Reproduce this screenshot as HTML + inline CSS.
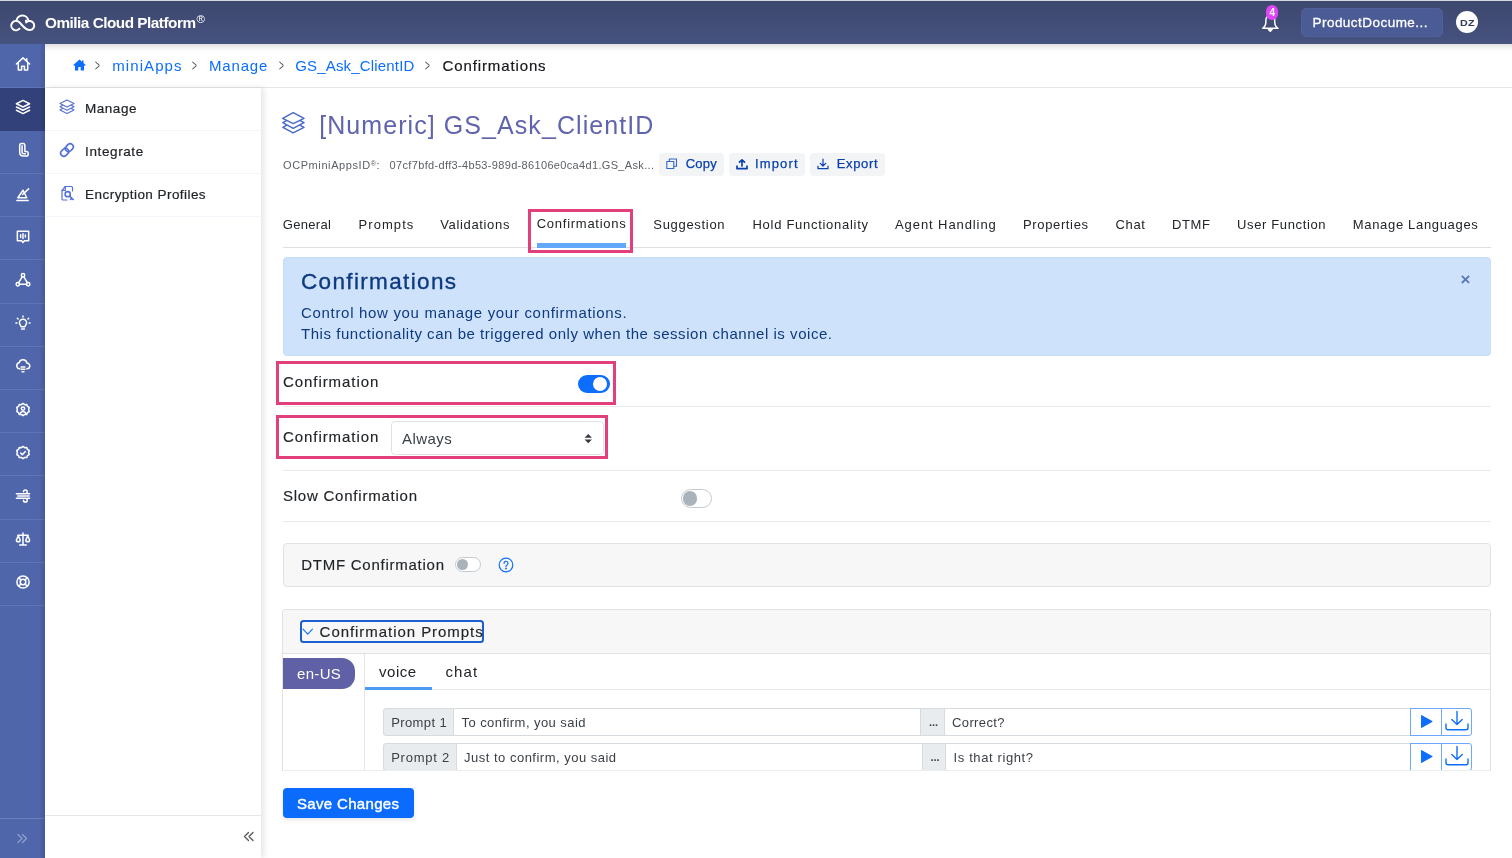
<!DOCTYPE html>
<html lang="en">
<head>
<meta charset="utf-8">
<title>Omilia Cloud Platform - Confirmations</title>
<style>
*{box-sizing:border-box;margin:0;padding:0}
html,body{width:1512px;height:858px;overflow:hidden;background:#fff}
body{will-change:transform;font-family:"Liberation Sans",sans-serif;color:#212529;position:relative}
a{text-decoration:none;color:#0d6efd}
.abs{position:absolute}
.t{position:absolute;white-space:nowrap;line-height:1}
/* top bar */
#top{position:absolute;left:0;top:0;width:1512px;height:44px;background:linear-gradient(#3d486e,#46527f);z-index:5;box-shadow:inset 0 1px 0 #d4d8e3}
#brand{left:45px;top:15px;font-size:15.300px;font-weight:bold;color:#fff}
#brand sup{font-size:11.500px;font-weight:normal;position:relative;top:-5px;vertical-align:baseline;margin-left:1px}
#acct{position:absolute;left:1301px;top:8px;width:142px;height:29px;border-radius:5px;background:#4b5b95;border:1px solid #505f9b}
#acct span{left:10.5px;top:7.2px;font-size:13.5px;color:#fff;-webkit-text-stroke:.3px #fff}
#avatar{position:absolute;left:1456px;top:11px;width:22px;height:22px;border-radius:50%;background:#fff}
#avatar span{left:3.900px;top:6.700px;font-size:9.500px;font-weight:bold;color:#333a5c;transform:scaleX(1.13);transform-origin:0 50%;letter-spacing:.2px}
#badge{position:absolute;left:1266.200px;top:5.300px;width:12.200px;height:14.500px;border-radius:6.100px;background:#df45f7}
#badge span{left:3.2px;top:3.2px;font-size:10px;color:#fff;font-weight:bold}
/* left rail */
#rail{position:absolute;left:0;top:44px;width:45px;height:814px;background:#5066ab}
#rail:after{content:"";position:absolute;right:0;top:0;width:6px;height:814px;background:linear-gradient(90deg,rgba(20,30,80,0),rgba(20,30,80,.16))}
#rail .it{position:absolute;left:0;width:45px;height:43px;border-bottom:1px solid #6075b6}
#rail .it.on{background:#32417a;border-bottom-color:#32417a}
#rail svg{position:absolute;left:14.500px;top:11.500px;width:16px;height:16px;fill:none;stroke:#fff;stroke-width:1.6;stroke-linecap:round;stroke-linejoin:round}
/* breadcrumb */
#crumb{position:absolute;left:45px;top:44px;width:1467px;height:44px;background:#fff;border-bottom:1px solid #e6e6e6;box-shadow:inset 0 8px 6px -6px rgba(0,0,0,.17)}
#crumb .t{top:14px;font-size:15px}
#crumb .sep{color:#555;font-size:16px;top:13.700px;transform:scaleX(.52);transform-origin:0 50%}
/* side panel */
#side{position:absolute;left:45px;top:88px;width:216px;height:770px;background:#fff;box-shadow:3px 0 6px rgba(0,0,0,.10)}
#side .row{position:absolute;left:0;width:216px;height:43px;border-bottom:1px solid #f4f5fb}
#side .row .t{left:40px;top:13.600px;font-size:13.500px;color:#212529;-webkit-text-stroke:.2px #212529}
#side svg{position:absolute;left:14.200px;top:10.500px;width:16px;height:16px;fill:none;stroke:#5472d6;stroke-width:1.3;stroke-linecap:round;stroke-linejoin:round}
#side .foot{position:absolute;left:0;top:727px;width:216px;height:43px;border-top:1px solid #e6e6e6}
/* main */
#main{position:absolute;left:262px;top:88px;width:1250px;height:770px}

#pg{position:absolute;left:-262px;top:-88px;width:0;height:0}
#title{left:320px;top:113px;font-size:25px;color:#6063ad}
.ocp{font-size:11px;color:#5c6166;top:159.500px}
.ocp sup{font-size:7px;position:relative;top:-3px;vertical-align:baseline}
.sbtn{position:absolute;top:152.600px;height:23px;border-radius:4px;background:#f3f4f6}
.sbtn .t{top:4.200px;font-size:13px;color:#0a41ad;-webkit-text-stroke:.25px #0a41ad}
.sbtn svg{position:absolute;top:5.500px;width:12px;height:12px;fill:none;stroke:#0a41ad;stroke-width:1.300;stroke-linecap:round;stroke-linejoin:round}
.tab{top:217.800px;font-size:13px;color:#212529}
.hl{position:absolute;border:3px solid #e2407c}
.hr{position:absolute;left:283px;width:1208px;height:1px;background:#ebebeb}
#alert{position:absolute;left:283px;top:257px;width:1208px;height:99px;background:#cfe2fc;border:1px solid #c6dcfb;border-radius:4px}
.lbl{font-size:15px;color:#212529;-webkit-text-stroke:.15px #212529}
.sw{position:absolute;border-radius:20px}
.sw i{position:absolute;border-radius:50%;display:block}
.card{position:absolute;left:283px;width:1208px;background:#fff;border:1px solid #e2e2e2;border-radius:4px;overflow:hidden}
.igrp{position:absolute;height:27.500px;border:1px solid #d6dbe0;background:#fff}
.igrp .t{top:6.500px;font-size:13px;color:#3a3f45}
</style>
</head>
<body>
<header id="top">
  <svg class="abs" style="left:0;top:0" width="44" height="44" viewBox="0 0 44 44" fill="none" stroke="#fff" stroke-width="2" stroke-linecap="round" stroke-linejoin="round"><path d="M19.500 28.700A4.700 4.700 0 1 1 18.600 21.700C21.500 23.500 24.500 30.100 29.700 30.100A4.600 4.600 0 1 0 26.200 22.400C25.800 21.600 25.800 21 26.100 20.500"/><path d="M16.500 20.800A6 6 0 0 1 28.400 20.600"/></svg>
  <div class="t" id="brand" style="left:45.00px;letter-spacing:-0.482px">Omilia Cloud Platform<sup>®</sup></div>
  <svg class="abs" style="left:1256px;top:10px" width="28" height="26" viewBox="1256 10 28 26" fill="none" stroke="#fff" stroke-width="1.500" stroke-linejoin="round" stroke-linecap="round"><path d="M1262.700 28.300C1265 26.800 1265.900 24.500 1265.900 21.500V20a4.400 4.400 0 0 1 8.800 0v1.500c0 3 .9 5.300 3.200 6.800z"/><path d="M1268.300 29.800l2 2.100 2-2.100z" fill="#fff" stroke-width="1"/></svg>
  <div id="badge"><span class="t">4</span></div>
  <div id="acct"><span class="t" id="acctt" style="left:10.50px;letter-spacing:0.464px">ProductDocume...</span></div>
  <div id="avatar"><span class="t" id="avd">DZ</span></div>
</header>

<nav id="rail">
  <div class="it" style="top:0;height:44px"><svg viewBox="0 0 17 17"><path d="M1.500 8.500 8.500 2l7 6.500"/><path d="M3.500 7.500v7.500h3.500v-4h3v4h3.500V7.500"/><path d="M12.500 3v2"/></svg></div>
  <div class="it on" style="top:43.7px;height:43.2px"><svg viewBox="0 0 17 17"><path d="M8.500 1.500 15.500 5 8.500 8.500 1.500 5z"/><path d="M1.500 8.500 8.500 12l7-3.500"/><path d="M1.500 12 8.500 15.500l7-3.500"/></svg></div>
  <div class="it" style="top:86.9px;height:43.2px"><svg viewBox="0 0 17 17"><path d="M5 3.500a2 2 0 0 1 2-2h1.500a2 2 0 0 1 2 2v6.500h1.500a2 2 0 0 1 2 2v1a2 2 0 0 1-2 2H9c-2.500 0-4-1.500-4-4z"/><path d="M7.500 4v7c0 1 .5 1.500 1.500 1.500h2"/></svg></div>
  <div class="it" style="top:130.1px;height:43.2px"><svg viewBox="0 0 17 17"><path d="M3 12.500 8.500 4.500l4 8z"/><path d="M8 9 14.500 3"/><path d="M2 15.500h12"/></svg></div>
  <div class="it" style="top:173.3px;height:43.2px"><svg viewBox="0 0 17 17"><path d="M2.500 2.500h12v10H10l-1.500 1.800L7 12.500H2.500z"/><path d="M6 6v3M8.500 5v5M11 6.500v2"/></svg></div>
  <div class="it" style="top:216.5px;height:43.2px"><svg viewBox="0 0 17 17"><circle cx="8.500" cy="3.500" r="1.800"/><circle cx="3" cy="13" r="1.800"/><circle cx="14" cy="13" r="1.800"/><path d="M7.600 5.200 3.900 11.300M9.400 5.200l3.700 6.100M4.800 13h7.400"/></svg></div>
  <div class="it" style="top:259.7px;height:43.2px"><svg viewBox="0 0 17 17"><path d="M6.500 12.500c0-1.200-1.800-2-1.800-4.200a3.800 3.800 0 0 1 7.600 0c0 2.200-1.800 3-1.800 4.200z"/><path d="M7 15h3"/><path d="M8.500 1v1M2.500 3.500l.8.800M14.500 3.500l-.8.800M1 8.500h1M15 8.500h1"/></svg></div>
  <div class="it" style="top:302.9px;height:43.2px"><svg viewBox="0 0 17 17"><path d="M5 11.500a3.300 3.300 0 0 1-.6-6.500 4.300 4.300 0 0 1 8.300.300 3.100 3.100 0 0 1-.2 6.200"/><path d="M6.500 9.500h4M6.500 12h4M7.500 14.500h2"/></svg></div>
  <div class="it" style="top:346.1px;height:43.2px"><svg viewBox="0 0 17 17"><path d="M8.500 1.500l1.800 1.300 2.200-.2.700 2.100 1.900 1.100-.6 2.200.6 2.200-1.900 1.100-.7 2.100-2.200-.2-1.800 1.300-1.800-1.300-2.200.2-.7-2.100-1.900-1.100.6-2.200-.6-2.200 1.900-1.100.7-2.100 2.200.2z"/><circle cx="8.500" cy="7" r="1.800"/><path d="M5.300 12.300c.5-1.600 1.800-2.300 3.200-2.300s2.700.7 3.200 2.300"/></svg></div>
  <div class="it" style="top:389.3px;height:43.2px"><svg viewBox="0 0 17 17"><path d="M8.500 1.500l1.800 1.300 2.200-.2.700 2.100 1.900 1.100-.6 2.200.6 2.200-1.900 1.100-.7 2.100-2.200-.2-1.800 1.300-1.800-1.300-2.200.2-.7-2.100-1.900-1.100.6-2.200-.6-2.200 1.900-1.100.7-2.100 2.200.2z"/><path d="M6 8.500l1.800 1.800L11 7"/></svg></div>
  <div class="it" style="top:432.5px;height:43.2px"><svg viewBox="0 0 17 17"><path d="M1.500 6h9.500a2 2 0 1 0-2-2"/><path d="M3 8.500h12"/><path d="M1.500 11h9.500a2 2 0 1 1-2 2"/><path d="M13 6h2.500M13 11h2.500"/></svg></div>
  <div class="it" style="top:475.7px;height:43.2px"><svg viewBox="0 0 17 17"><path d="M8.500 2v12M5 15h7M3 4.500h11"/><path d="M1.500 9.500 3.500 5l2 4.500a2 2 0 0 1-4 0zM11.500 9.500l2-4.500 2 4.500a2 2 0 0 1-4 0z"/></svg></div>
  <div class="it" style="top:518.9px;height:43.2px"><svg viewBox="0 0 17 17"><circle cx="8.500" cy="8.500" r="6.500"/><circle cx="8.500" cy="8.500" r="3"/><path d="M4 4l2.300 2.300M13 4l-2.300 2.300M4 13l2.300-2.300M13 13l-2.300-2.300"/></svg></div>
  <div class="abs" style="left:0;top:773.500px;width:45px;height:1px;background:#6b7fbb"></div>
  <svg class="abs" style="left:16px;top:789px;width:12px;height:11px;stroke:#8f9fd0;stroke-width:1.300" viewBox="0 0 12 11"><path d="M2 1.500l4 4-4 4M6.500 1.500l4 4-4 4"/></svg>
</nav>

<div id="crumb">
  <svg class="abs" style="left:28px;top:15px" width="13" height="12" viewBox="0 0 13 12" fill="#0d6efd"><path d="M6.500 .5.300 6l.8.900L2 6.200V11.500h3.300V8h2.400v3.500H11V6.200l.9.700.8-.9L10.500 4V1.500H9v1.200z"/></svg>
  <span class="t sep" style="left:50px">&gt;</span>
  <a class="t" style="left:67.21px;letter-spacing:1.085px" id="c1">miniApps</a>
  <span class="t sep" style="left:147px">&gt;</span>
  <a class="t" style="left:163.91px;letter-spacing:0.856px" id="c2">Manage</a>
  <span class="t sep" style="left:234px">&gt;</span>
  <a class="t" style="left:250.21px;letter-spacing:0.177px" id="c3">GS_Ask_ClientID</a>
  <span class="t sep" style="left:380px">&gt;</span>
  <span class="t" style="color:#16181b;-webkit-text-stroke:.2px #16181b;left:397.61px;letter-spacing:0.871px" id="c4">Confirmations</span>
</div>

<aside id="side">
  <div class="row" style="top:0"><svg viewBox="0 0 16 16" style="stroke-width:1.100"><path d="M8 1 15 4.500 8 8 1 4.500z"/><path d="M3.600 6.300 1 7.800 8 11.300 15 7.800 12.400 6.300"/><path d="M3.600 9.600 1 11.100 8 14.600 15 11.100 12.400 9.600"/></svg><span class="t" id="s1" style="left:40.11px;letter-spacing:0.501px">Manage</span></div>
  <div class="row" style="top:43px"><svg viewBox="0 0 16 16" style="stroke-width:1.700"><rect x="-4.300" y="-3.100" width="8.600" height="6.200" rx="3.100" transform="translate(10.300 5.700) rotate(-45)"/><rect x="-4.300" y="-3.100" width="8.600" height="6.200" rx="3.100" transform="translate(5.700 10.300) rotate(-45)"/></svg><span class="t" id="s2" style="left:40.11px;letter-spacing:0.600px">Integrate</span></div>
  <div class="row" style="top:86px"><svg viewBox="0 0 16 16" style="stroke-width:1.200"><path d="M3 5.500 6.300 1.500H12.500a1 1 0 0 1 1 1V6M3 5.500V14a1 1 0 0 0 1 1h4"/><path d="M6.300 1.500v4H3"/><circle cx="8.700" cy="9.200" r="2.600" style="stroke-width:1.600"/><path d="M10.500 11l3.700 3.500M12.800 13.300l-1.100 1.100" style="stroke-width:1.700"/></svg><span class="t" id="s3" style="left:40.11px;letter-spacing:0.441px">Encryption Profiles</span></div>
  <div class="foot"><svg style="left:198px;top:15px;width:12px;height:11px;stroke:#555;stroke-width:1.300" viewBox="0 0 12 11"><path d="M5.500 1.500l-4 4 4 4M10 1.500l-4 4 4 4"/></svg></div>
</aside>

<main id="main"><div id="pg">
  <svg class="abs" style="left:281px;top:110px" width="25" height="25" viewBox="281 110 25 25" fill="none" stroke="#486ac8" stroke-width="1.500" stroke-linejoin="round" stroke-linecap="round"><path d="M293.200 112.700 304 118.400 293.200 123.600 282.700 118.400z"/><path d="M286.300 120.700 282.900 122.700 293.200 128.300 304 122.700 300.200 120.700"/><path d="M286.300 125.300 282.900 127.300 293.200 132.800 304 127.300 300.200 125.300"/></svg>
  <h1 class="t" id="title" style="font-weight:normal;left:319.21px;letter-spacing:1.069px">[Numeric] GS_Ask_ClientID</h1>
  <span class="t ocp" style="left:283.00px;letter-spacing:0.592px" id="o1">OCPminiAppsID<sup>®</sup>:</span>
  <span class="t ocp" style="left:389.61px;letter-spacing:0.335px" id="o2">07cf7bfd-dff3-4b53-989d-86106e0ca4d1.GS_Ask...</span>
  <div class="sbtn" style="left:659px;width:65px"><svg style="left:7px;stroke-width:1.100;stroke:#3566cc" viewBox="0 0 12 12"><path d="M.8 3.500h7v7h-7z"/><path d="M3.300 3.500V1h7.200v7.200H7.800"/></svg><span class="t" style="left:26.80px;letter-spacing:0.180px" id="b1">Copy</span></div>
  <div class="sbtn" style="left:729px;width:76px"><svg style="left:7px;stroke-width:1.700" viewBox="0 0 12 12"><path d="M6 8V1.800M3.500 4.200 6 1.800 8.500 4.200M1 8.200v2.500h10V8.200"/></svg><span class="t" style="left:26.00px;letter-spacing:1.131px" id="b2">Import</span></div>
  <div class="sbtn" style="left:810px;width:75px"><svg style="left:7px;stroke-width:1.200" viewBox="0 0 12 12"><path d="M6 1.200V8M3.300 5.300 6 8l2.700-2.700M1 8.200v2.500h10V8.200"/></svg><span class="t" style="left:26.71px;letter-spacing:0.644px" id="b3">Export</span></div>

  <span class="t tab" style="left:282.71px;letter-spacing:0.325px" id="t1">General</span>
  <span class="t tab" style="left:358.61px;letter-spacing:1.049px" id="t2">Prompts</span>
  <span class="t tab" style="left:440.21px;letter-spacing:0.656px" id="t3">Validations</span>
  <span class="t tab" style="top:216.500px;left:536.71px;letter-spacing:0.741px" id="t4">Confirmations</span>
  <span class="t tab" style="left:653.30px;letter-spacing:0.693px" id="t5">Suggestion</span>
  <span class="t tab" style="left:752.50px;letter-spacing:0.716px" id="t6">Hold Functionality</span>
  <span class="t tab" style="left:895.00px;letter-spacing:0.915px" id="t7">Agent Handling</span>
  <span class="t tab" style="left:1023.00px;letter-spacing:0.639px" id="t8">Properties</span>
  <span class="t tab" style="left:1115.40px;letter-spacing:0.710px" id="t9">Chat</span>
  <span class="t tab" style="left:1172.00px;letter-spacing:0.630px" id="t10">DTMF</span>
  <span class="t tab" style="left:1237.00px;letter-spacing:0.640px" id="t11">User Function</span>
  <span class="t tab" style="left:1352.80px;letter-spacing:0.671px" id="t12">Manage Languages</span>
  <div class="hr" style="top:247px;background:#dfdfdf"></div>
  <div class="abs" style="left:536.600px;top:242.700px;width:89.400px;height:5px;background:#62a7f9"></div>
  <div class="hl" style="left:528px;top:209px;width:105px;height:43.700px"></div>

  <div id="alert">
    <span class="t" style="top:13px;font-size:22.500px;color:#0e3a80;-webkit-text-stroke:.35px #0e3a80;left:17.00px;letter-spacing:1.349px" id="a0">Confirmations</span>
    <span class="t" style="top:46.500px;font-size:15px;color:#0e3a80;left:17.00px;letter-spacing:0.684px" id="a1">Control how you manage your confirmations.</span>
    <span class="t" style="top:68px;font-size:15px;color:#0e3a80;left:17.00px;letter-spacing:0.539px" id="a2">This functionality can be triggered only when the session channel is voice.</span>
    <span class="t" style="left:1176.600px;top:13.200px;font-size:17px;font-weight:bold;color:#587ab8">×</span>
  </div>

  <span class="t lbl" style="top:374px;left:283.00px;letter-spacing:0.932px" id="l1">Confirmation</span>
  <div class="sw" style="left:577.500px;top:375px;width:32px;height:18px;background:#0d6efd"><i style="left:15.200px;top:1.600px;width:14.800px;height:14.800px;background:#fff"></i></div>
  <div class="hl" style="left:276px;top:361px;width:340px;height:44px"></div>
  <div class="hr" style="top:406px"></div>

  <span class="t lbl" style="top:429.300px;left:283.00px;letter-spacing:0.932px" id="l2">Confirmation</span>
  <div class="abs" style="left:391px;top:421px;width:212.500px;height:34px;border:1px solid #dfe3e8;border-radius:4px;background:#fff">
    <span class="t" style="top:8.500px;font-size:15px;color:#3a3f45;left:10.00px;letter-spacing:0.437px" id="l3">Always</span>
    <svg class="abs" style="left:191.800px;top:11.500px" width="8.500" height="9.300" viewBox="0 0 7 10" preserveAspectRatio="none" fill="#343a40"><path d="M3.500 0 6.500 4h-6zM3.500 10 .5 6h6z"/></svg>
  </div>
  <div class="hl" style="left:276px;top:415px;width:332px;height:43.700px"></div>
  <div class="hr" style="top:470px"></div>

  <span class="t lbl" style="top:488px;left:283.00px;letter-spacing:0.768px" id="l4">Slow Confirmation</span>
  <div class="sw" style="left:680.500px;top:489px;width:31.300px;height:19px;background:#fff;border:1px solid #c5cad0"><i style="left:1.200px;top:1.200px;width:14.600px;height:14.600px;background:#aab2ba"></i></div>
  <div class="hr" style="top:521px"></div>

  <div class="card" style="top:543px;height:44px;background:#f7f7f7">
    <span class="t lbl" style="top:13.200px;left:17.25px;letter-spacing:0.743px" id="l5">DTMF Confirmation</span>
    <div class="sw" style="left:171.300px;top:13px;width:25.800px;height:15px;background:#fff;border:1px solid #c5cad0"><i style="left:1.200px;top:1px;width:11px;height:11px;background:#aab2ba"></i></div>
    <svg class="abs" style="left:214.200px;top:13.200px" width="16" height="16" viewBox="0 0 16 16" fill="none" stroke="#0d6efd" stroke-width="1.200" stroke-linecap="round"><circle cx="8" cy="8" r="6.800"/><path d="M6 6.300a2 2 0 1 1 3 1.700c-.7.400-1 .8-1 1.500"/><circle cx="8" cy="11.600" r=".4" fill="#0d6efd"/></svg>
  </div>

  <div class="card" style="top:609px;height:162px;left:282px;width:1209px;border-radius:4px 4px 0 0;border-bottom-color:#ececec">
    <div class="abs" style="left:0;top:0;width:1209px;height:44px;background:#f7f7f7;border-bottom:1px solid #e2e2e2"></div>
    <div class="abs" style="left:17.300px;top:9.500px;width:183.500px;height:23.300px;border:2px solid #1b5fd0;border-radius:3.500px">
      <svg class="abs" style="left:0;top:6.200px" width="11.500" height="8" viewBox="0 0 11 8" fill="none" stroke="#0d6efd" stroke-width="1.100" stroke-linecap="round" stroke-linejoin="round"><path d="M.8 1.200 5.500 6.200 10.200 1.200"/></svg>
      <span class="t lbl" style="top:2px;left:17.31px;letter-spacing:0.949px" id="l6">Confirmation Prompts</span>
    </div>
    <div class="abs" style="left:0;top:48px;width:71.700px;height:30.500px;background:#5f60a6;border-radius:0 13px 13px 0"><span class="t" style="top:8px;font-size:15px;color:#fff;left:14.00px;letter-spacing:0.317px" id="l7">en-US</span></div>
    <div class="abs" style="left:81px;top:44px;width:1px;height:120px;background:#e6e6e6"></div>
    <span class="t" style="top:54px;font-size:15px;color:#212529;left:96.11px;letter-spacing:0.467px" id="l8">voice</span>
    <span class="t" style="top:54px;font-size:15px;color:#212529;left:162.50px;letter-spacing:1.114px" id="l9">chat</span>
    <div class="abs" style="left:82px;top:79px;width:1127px;height:1px;background:#e6e6e6"></div>
    <div class="abs" style="left:82px;top:76.500px;width:66.500px;height:3.300px;background:#4d9af3"></div>

    <div class="igrp" style="left:99.500px;top:98px;width:71.500px;background:#e9ecef;border-radius:3px 0 0 3px"><span class="t" style="left:7.71px;letter-spacing:0.393px" id="p1">Prompt 1</span></div>
    <div class="igrp" style="left:170px;top:98px;width:468px"><span class="t" style="left:7.51px;letter-spacing:0.442px" id="p2">To confirm, you said</span></div>
    <div class="igrp" style="left:637px;top:98px;width:25px;background:#e9ecef"><span class="t" style="left:8px;font-weight:bold;font-size:11px;top:8px">...</span></div>
    <div class="igrp" style="left:661px;top:98px;width:467px"><span class="t" style="left:7.00px;letter-spacing:0.392px" id="p3">Correct?</span></div>
    <div class="igrp" style="left:1127px;top:98px;width:32px;border-color:#6ea8fe"><svg class="abs" style="left:8.500px;top:4.500px" width="13.500" height="15" viewBox="0 0 13 14" fill="#0d6efd" stroke="#0d6efd" stroke-width="1" stroke-linejoin="round"><path d="M1.500 1.300v11.400L11.500 7z"/></svg></div>
    <div class="igrp" style="left:1158px;top:98px;width:31px;border-color:#6ea8fe;border-radius:0 3px 3px 0"><svg class="abs" style="left:2.500px;top:1.300px" width="24" height="22" viewBox="0 0 24 22" fill="none" stroke="#0d6efd" stroke-width="1.400" stroke-linecap="round" stroke-linejoin="round"><path d="M12 1.500v13M6.800 9.500l5.200 5 5.200-5M1 14v3.800a2 2 0 0 0 2 2h18a2 2 0 0 0 2-2V14"/></svg></div>

    <div class="igrp" style="left:99.500px;top:133px;width:74.500px;background:#e9ecef;border-radius:3px 0 0 3px"><span class="t" style="left:7.71px;letter-spacing:0.750px" id="p4">Prompt 2</span></div>
    <div class="igrp" style="left:173px;top:133px;width:467px"><span class="t" style="left:7.11px;letter-spacing:0.489px" id="p5">Just to confirm, you said</span></div>
    <div class="igrp" style="left:639px;top:133px;width:24px;background:#e9ecef"><span class="t" style="left:7.500px;font-weight:bold;font-size:11px;top:8px">...</span></div>
    <div class="igrp" style="left:662px;top:133px;width:466px"><span class="t" style="left:7.61px;letter-spacing:0.604px" id="p6">Is that right?</span></div>
    <div class="igrp" style="left:1127px;top:133px;width:32px;border-color:#6ea8fe"><svg class="abs" style="left:8.500px;top:4.500px" width="13.500" height="15" viewBox="0 0 13 14" fill="#0d6efd" stroke="#0d6efd" stroke-width="1" stroke-linejoin="round"><path d="M1.500 1.300v11.400L11.500 7z"/></svg></div>
    <div class="igrp" style="left:1158px;top:133px;width:31px;border-color:#6ea8fe;border-radius:0 3px 3px 0"><svg class="abs" style="left:2.500px;top:1.300px" width="24" height="22" viewBox="0 0 24 22" fill="none" stroke="#0d6efd" stroke-width="1.400" stroke-linecap="round" stroke-linejoin="round"><path d="M12 1.500v13M6.800 9.500l5.200 5 5.200-5M1 14v3.800a2 2 0 0 0 2 2h18a2 2 0 0 0 2-2V14"/></svg></div>
  </div>

  <div class="abs" style="left:282.500px;top:788px;width:131.500px;height:30px;background:#0a6bfc;border-radius:4px;box-shadow:0 2px 4px rgba(0,0,0,.10)"><span class="t" style="top:7.500px;font-size:15px;color:#fff;-webkit-text-stroke:.4px #fff;left:14.50px;letter-spacing:0.327px" id="sv">Save Changes</span></div>
</div></main>
</body>
</html>
